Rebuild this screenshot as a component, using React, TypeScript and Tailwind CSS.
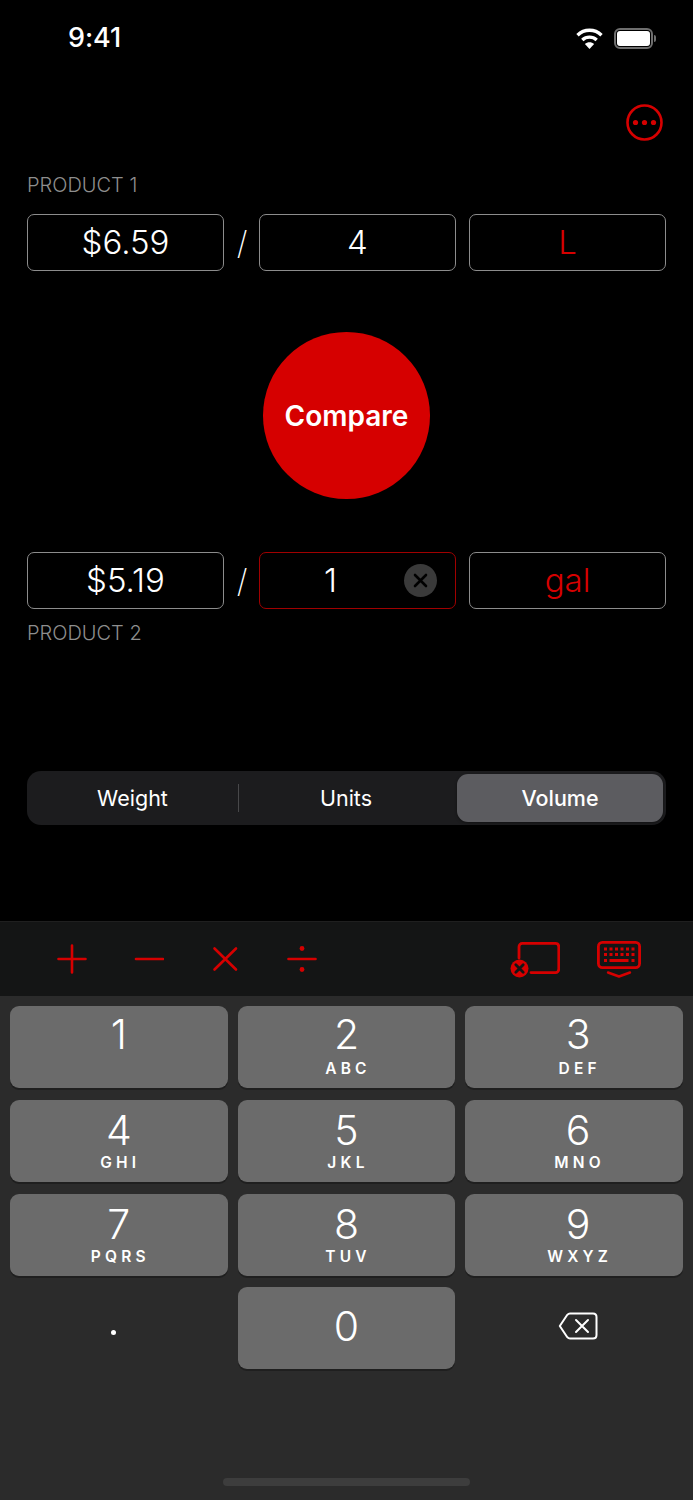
import React from 'react';

const RED = '#d60000';

interface KeyItem {
  digit: string;
  letters?: string;
}

const keyRows: KeyItem[][] = [
  [{ digit: '1' }, { digit: '2', letters: 'ABC' }, { digit: '3', letters: 'DEF' }],
  [{ digit: '4', letters: 'GHI' }, { digit: '5', letters: 'JKL' }, { digit: '6', letters: 'MNO' }],
  [{ digit: '7', letters: 'PQRS' }, { digit: '8', letters: 'TUV' }, { digit: '9', letters: 'WXYZ' }],
];

const Field: React.FC<{ children: React.ReactNode; className?: string }> = ({ children, className }) => (
  <div
    className={`relative flex h-[57px] w-[197px] shrink-0 items-center justify-center rounded-[7px] border text-[33px] font-light ${className ?? 'border-[#8c8c8c]'}`}
  >
    {children}
  </div>
);

const NumKey: React.FC<{ item: KeyItem; firstRow: boolean; lastCol: boolean }> = ({ item, firstRow, lastCol }) => (
  <div
    className={`flex h-[82px] w-[218px] flex-col items-center rounded-[9px] bg-[#6b6b6b] shadow-[0_2px_0_#1f1f1f] ${lastCol ? 'pl-[8px]' : ''}`}
  >
    <span className={`h-[48px] text-[41px] leading-[48px] font-light text-white ${firstRow ? 'mt-[4px]' : 'mt-[6px]'}`}>
      {item.digit}
    </span>
    {item.letters && (
      <span
        className={`pl-[3px] text-[15.5px] leading-[18px] font-semibold tracking-[4.2px] text-white ${firstRow ? 'mt-[2px]' : 'mt-0'}`}
      >
        {item.letters}
      </span>
    )}
  </div>
);

export default function App() {
  return (
    <div className="flex h-[1500px] w-[693px] flex-col overflow-hidden bg-black font-['Inter',sans-serif] text-white antialiased">
      {/* Status bar */}
      <header className="flex h-[76px] shrink-0 items-center justify-between pr-[37px] pl-[68px]">
        <span className="text-[27px] font-medium tracking-[-0.1px]">9:41</span>
        <div className="flex items-center gap-[11px]">
          <svg width="27" height="21" viewBox="0 0 27 21" fill="none">
            <path d="M1.5 7.2C8.3 0.6 18.7 0.6 25.5 7.2" stroke="white" strokeWidth="3.4" />
            <path d="M6.3 12C10.4 8.2 16.6 8.2 20.7 12" stroke="white" strokeWidth="3.4" />
            <path d="M13.5 21L8.9 15.9C11.5 13.6 15.5 13.6 18.1 15.9Z" fill="white" />
          </svg>
          <div className="flex items-center gap-[1px]">
            <div className="flex h-[21px] w-[39px] items-center justify-center rounded-[6px] border-2 border-[#6e6e6e]">
              <div className="h-[15px] w-[33px] rounded-[3px] bg-white" />
            </div>
            <div className="h-[7px] w-[2px] rounded-r-[2px] bg-[#6e6e6e]" />
          </div>
        </div>
      </header>

      {/* More button */}
      <div className="flex h-[64px] shrink-0 justify-end pt-[28px] pr-[30px]">
        <svg width="37" height="37" viewBox="0 0 37 37" fill="none" className="shrink-0">
          <circle cx="18.5" cy="18.5" r="17" stroke={RED} strokeWidth="2.6" />
          <circle cx="9.5" cy="18.5" r="2.6" fill={RED} />
          <circle cx="18.5" cy="18.5" r="2.6" fill={RED} />
          <circle cx="27.5" cy="18.5" r="2.6" fill={RED} />
        </svg>
      </div>

      <main className="flex flex-col px-[27px]">
        <p className="mt-[33px] text-[20px] leading-[24px] font-light text-[#8e8e8e]">PRODUCT 1</p>
        <div className="mt-[17px] flex items-center">
          <Field>$6.59</Field>
          <span className="w-[35px] pl-[1px] text-center text-[32px] font-extralight">/</span>
          <Field>4</Field>
          <Field className="ml-[13px] border-[#8c8c8c] text-[#d60000]">L</Field>
        </div>

        <div className="mt-[61px] flex justify-center">
          <button className="flex h-[167px] w-[167px] items-center justify-center rounded-full bg-[#d60000] pt-[1px] text-[28px] font-semibold text-white">
            Compare
          </button>
        </div>

        <div className="mt-[53px] flex items-center">
          <Field className="border-[#8c8c8c] pt-[1px]">$5.19</Field>
          <span className="w-[35px] pl-[1px] text-center text-[32px] font-extralight">/</span>
          <Field className="justify-start border-[#a00000] pt-[1px] pl-[64px]">
            1
            <span className="absolute top-[11px] right-[18px] flex h-[33px] w-[33px] items-center justify-center rounded-full bg-[#3a3a3a]">
              <svg width="15" height="15" viewBox="0 0 15 15" fill="none">
                <path d="M2 2L13 13M13 2L2 13" stroke="black" strokeWidth="2.6" strokeLinecap="round" />
              </svg>
            </span>
          </Field>
          <Field className="ml-[13px] border-[#8c8c8c] pt-[1px] text-[#d60000]">gal</Field>
        </div>
        <p className="mt-[12px] text-[20px] leading-[24px] font-light text-[#8e8e8e]">PRODUCT 2</p>

        {/* Segmented control */}
        <div className="mt-[126px] flex h-[54px] items-center rounded-[14px] bg-[#1c1c1e] pr-[3px] text-[21.5px]">
          <div className="flex w-[211px] justify-center">Weight</div>
          <div className="h-[28px] w-px bg-[#48484a]" />
          <div className="flex w-[218px] justify-center pr-[4px]">Units</div>
          <div className="flex h-[48px] w-[206px] items-center justify-center rounded-[11px] bg-[#5c5c60] font-medium shadow-[0_1px_3px_rgba(0,0,0,0.4)]">
            Volume
          </div>
        </div>
      </main>

      {/* Accessory bar */}
      <div className="mt-[96px] flex h-[75px] shrink-0 items-center border-t border-[#1f1f1f] bg-[#141515]">
        <div className="ml-[57px] flex items-center gap-[46.5px]">
          <svg width="30" height="30" viewBox="0 0 30 30" fill="none" stroke={RED} strokeWidth="2.6" strokeLinecap="round">
            <path d="M15 1.5V28.5M1.5 15H28.5" />
          </svg>
          <svg width="30" height="30" viewBox="0 0 30 30" fill="none" stroke={RED} strokeWidth="2.6" strokeLinecap="round">
            <path d="M2 15H29" />
          </svg>
          <svg width="30" height="30" viewBox="0 0 30 30" fill="none" stroke={RED} strokeWidth="2.6" strokeLinecap="round">
            <path d="M4.5 4.5L26 25.5M26 4.5L4.5 25.5" />
          </svg>
          <svg width="30" height="30" viewBox="0 0 30 30" fill="none">
            <path d="M1.5 15H28.5" stroke={RED} strokeWidth="2.6" strokeLinecap="round" />
            <circle cx="15" cy="4.5" r="2.4" fill={RED} />
            <circle cx="15" cy="25.5" r="2.4" fill={RED} />
          </svg>
        </div>
        <div className="ml-[193.5px] flex items-center gap-[37px]">
          <svg width="50" height="36" viewBox="0 0 50 36" fill="none" className="mt-[2px]">
            <path
              d="M9 16V5C9 2.8 10.4 1.4 12.4 1.4H45.4C47.4 1.4 48.8 2.8 48.8 5V27C48.8 29 47.4 30.6 45.4 30.6H21"
              stroke={RED}
              strokeWidth="2.8"
              strokeLinecap="round"
            />
            <circle cx="9.5" cy="26.5" r="9" fill={RED} />
            <path d="M5.8 22.8L13.2 30.2M13.2 22.8L5.8 30.2" stroke="#141515" strokeWidth="2.8" strokeLinecap="round" />
          </svg>
          <svg width="44" height="37" viewBox="0 0 44 37" fill="none">
            <rect x="1.4" y="1.4" width="41.2" height="25.2" rx="4" stroke={RED} strokeWidth="2.8" />
            <g fill={RED}>
              <rect x="7" y="6.5" width="3" height="3" />
              <rect x="12.5" y="6.5" width="3" height="3" />
              <rect x="18" y="6.5" width="3" height="3" />
              <rect x="23.5" y="6.5" width="3" height="3" />
              <rect x="29" y="6.5" width="3" height="3" />
              <rect x="34.5" y="6.5" width="3" height="3" />
              <rect x="7" y="12" width="3" height="3" />
              <rect x="12.5" y="12" width="3" height="3" />
              <rect x="18" y="12" width="3" height="3" />
              <rect x="23.5" y="12" width="3" height="3" />
              <rect x="29" y="12" width="3" height="3" />
              <rect x="34.5" y="12" width="3" height="3" />
              <rect x="7" y="18" width="3" height="3" />
              <rect x="12.5" y="18" width="19" height="3" />
              <rect x="34.5" y="18" width="3" height="3" />
            </g>
            <path d="M11 31.5L22 35.5L33 31.5" stroke={RED} strokeWidth="2.4" strokeLinecap="round" strokeLinejoin="round" />
          </svg>
        </div>
      </div>

      {/* Number pad */}
      <section className="relative flex flex-1 flex-col bg-[#2b2b2b] px-[10px] pt-[10px]">
        <div className="flex flex-col gap-[12px]">
          {keyRows.map((row, rowIndex) => (
            <div key={row[0].digit} className="flex gap-[10px]">
              {row.map((item, colIndex) => (
                <NumKey key={item.digit} item={item} firstRow={rowIndex === 0} lastCol={colIndex === 2} />
              ))}
            </div>
          ))}
          <div className="-mt-[1px] flex gap-[10px]">
            <div className="flex h-[82px] w-[218px] items-start justify-center pt-[43px] pr-[10px]">
              <span className="h-[5px] w-[5px] rounded-full bg-white" />
            </div>
            <div className="flex h-[82px] w-[218px] items-center justify-center rounded-[9px] bg-[#6b6b6b] shadow-[0_2px_0_#1f1f1f]">
              <span className="mb-[4px] text-[41px] leading-[48px] font-light">0</span>
            </div>
            <div className="flex h-[82px] w-[218px] items-center justify-center pb-[4px] pl-[8px]">
              <svg width="40" height="28" viewBox="0 0 40 28" fill="none">
                <path
                  d="M12 1.5H35C37 1.5 38.5 3 38.5 5V23C38.5 25 37 26.5 35 26.5H12C10.8 26.5 10 26 9.3 25.2L1.8 14L9.3 2.8C10 2 10.8 1.5 12 1.5Z"
                  stroke="white"
                  strokeWidth="2"
                  strokeLinejoin="round"
                />
                <path d="M18 8L30 20M30 8L18 20" stroke="white" strokeWidth="2" strokeLinecap="round" />
              </svg>
            </div>
          </div>
        </div>
        <div className="mt-auto mb-[14px] h-[8px] w-[247px] self-center rounded-full bg-[#3d3d3d]" />
      </section>
    </div>
  );
}
